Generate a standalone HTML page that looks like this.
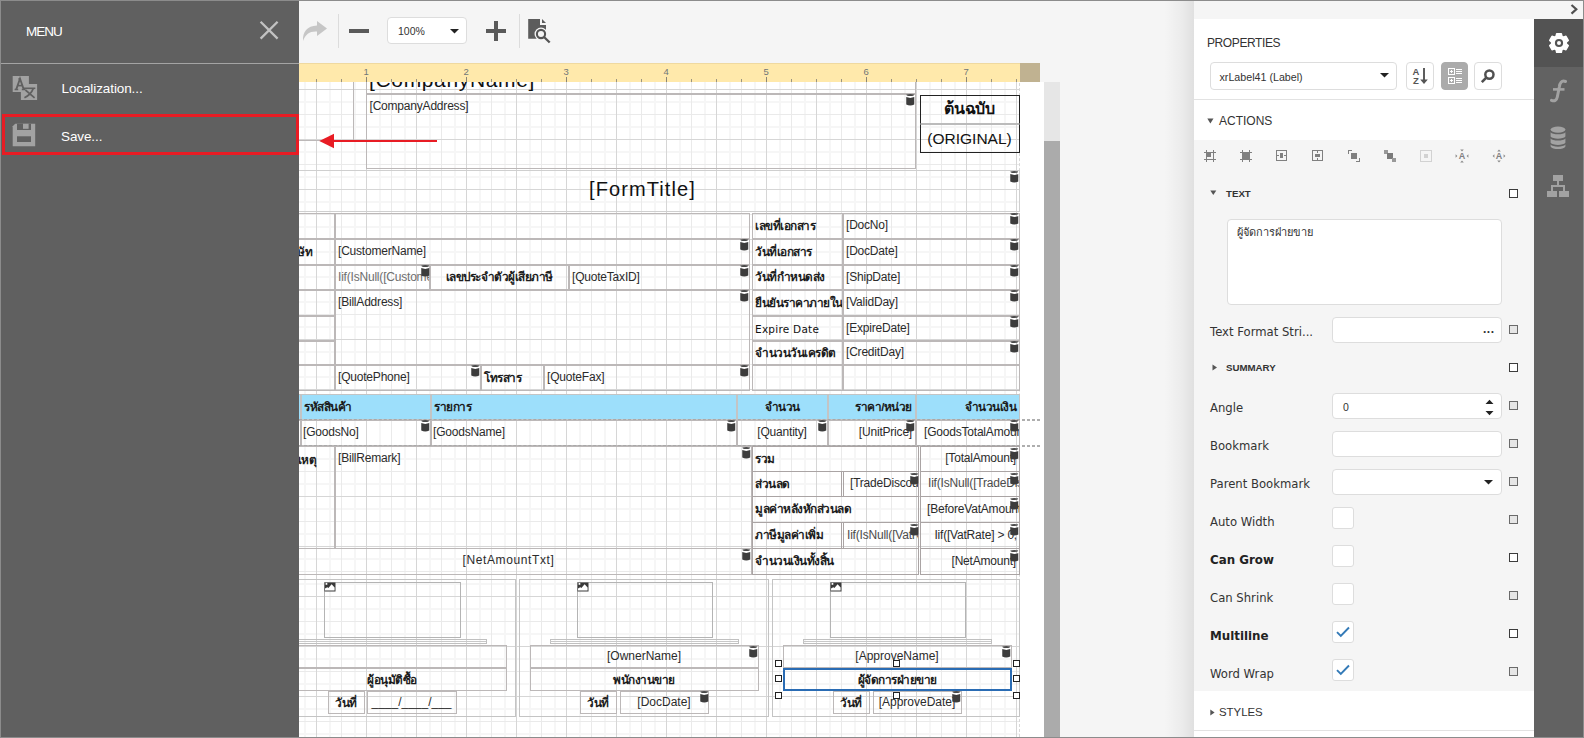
<!DOCTYPE html><html lang="th"><head><meta charset="utf-8"><title>Report Designer</title><style>
*{box-sizing:border-box;margin:0;padding:0}
html,body{width:1584px;height:738px;overflow:hidden;background:#f5f5f5}
body{position:relative;font-family:"Liberation Sans",sans-serif;color:#333}
.a{position:absolute}
#surf{position:absolute;left:299px;top:82px;width:745px;height:655px;background:#fff;overflow:hidden}
#page{position:absolute;left:-299px;top:-82px;width:1584px;height:738px}
.c{position:absolute;border:1px solid #bcb8b8;font-size:12px;letter-spacing:-0.2px;color:#2b2b2b;white-space:nowrap;overflow:hidden;display:flex;align-items:center;padding:0 3px 2px 2px}
.c.t{align-items:flex-start;padding-top:4px}
.c.ctr{justify-content:center}
.c.r{justify-content:flex-end}
.c.g{color:#6e6e6e}
.c.b{font-weight:bold;font-size:11.8px;letter-spacing:-0.5px;color:#1c1c1c}
.hd{background:#9ddffb}
.db{position:absolute;width:9px;height:12px}
.pic{position:absolute;width:12px;height:10px}
.hnd{position:absolute;width:7px;height:7px;border:1px solid #222;background:#fff}
.lbl{position:absolute;left:1210px;font-family:"DejaVu Sans","Liberation Sans",sans-serif;font-size:11.65px;color:#333;white-space:nowrap;line-height:14px}
.lbl.b{font-weight:bold;font-size:11.85px;color:#222}
.inp{position:absolute;left:1332px;width:170px;height:26px;background:#fff;border:1px solid #ddd;border-radius:4px}
.chk{position:absolute;left:1332px;width:22px;height:22px;background:#fff;border:1px solid #ddd;border-radius:3px}
.sq{position:absolute;left:1509px;width:9px;height:9px;border:1px solid #6a6a6a;background:#e6e6e6}
.sq.w{border-color:#3c3c3c;background:#fff}
.btn{position:absolute;top:62px;width:28px;height:28px;border:1px solid #ddd;border-radius:4px;background:#fff}
</style></head><body>
<div class="a" style="left:299px;top:0;width:895px;height:63px;background:#f5f5f5"></div>
<svg class="a" style="left:302px;top:20px" width="26" height="22" viewBox="0 0 26 22"><path d="M15 1 L25 8.5 L15 16 V11.5 C8 11 3.5 14 1 21 C0.5 12 5 6 15 5.5 Z" fill="#c6c6c6"/></svg>
<div class="a" style="left:338px;top:14px;width:1px;height:34px;background:#dcdcdc"></div>
<div class="a" style="left:349px;top:29px;width:20px;height:4px;background:#5a5a5a"></div>
<div class="a" style="left:387px;top:17px;width:80px;height:27px;background:#fff;border:1px solid #ddd;border-radius:4px"></div>
<div class="a" style="left:398px;top:24px;font-size:10.5px;line-height:14px;color:#333">100%</div>
<svg class="a" style="left:450px;top:29px" width="9" height="5" viewBox="0 0 9 5"><path d="M0 0H9L4.5 4.6Z" fill="#222"/></svg>
<div class="a" style="left:486px;top:29px;width:20px;height:4px;background:#5a5a5a"></div>
<div class="a" style="left:494px;top:21px;width:4px;height:20px;background:#5a5a5a"></div>
<div class="a" style="left:519px;top:14px;width:1px;height:34px;background:#dcdcdc"></div>
<svg class="a" style="left:528px;top:18px" width="24" height="26" viewBox="0 0 24 26"><path d="M0.2 1H12V7H18V20.7H0.2Z" fill="#5c5c5c"/><path d="M14 1L18 4.9H14Z" fill="#5c5c5c"/><circle cx="13" cy="16" r="6.5" fill="#f5f5f5"/><circle cx="13" cy="16" r="4.1" fill="none" stroke="#555" stroke-width="2.1"/><path d="M16 19L21.7 24.5" stroke="#555" stroke-width="2.3"/></svg>
<div class="a" style="left:299px;top:63px;width:721px;height:19px;background:#ffe9ab;border-top:1px solid #efd9a0"></div>
<div class="a" style="left:1020px;top:63px;width:20px;height:19px;background:#c0b291"></div>
<svg class="a" style="left:299px;top:63px" width="721" height="20" viewBox="299 63 721 20" shape-rendering="crispEdges"><rect x="316.0" y="79" width="1" height="3" fill="#9a9482"/><rect x="341.0" y="79" width="1" height="3" fill="#9a9482"/><rect x="366.0" y="77" width="1" height="5" fill="#8a8577"/><rect x="391.0" y="79" width="1" height="3" fill="#9a9482"/><rect x="416.0" y="79" width="1" height="3" fill="#9a9482"/><rect x="441.0" y="79" width="1" height="3" fill="#9a9482"/><rect x="466.0" y="77" width="1" height="5" fill="#8a8577"/><rect x="491.0" y="79" width="1" height="3" fill="#9a9482"/><rect x="516.0" y="79" width="1" height="3" fill="#9a9482"/><rect x="541.0" y="79" width="1" height="3" fill="#9a9482"/><rect x="566.0" y="77" width="1" height="5" fill="#8a8577"/><rect x="591.0" y="79" width="1" height="3" fill="#9a9482"/><rect x="616.0" y="79" width="1" height="3" fill="#9a9482"/><rect x="641.0" y="79" width="1" height="3" fill="#9a9482"/><rect x="666.0" y="77" width="1" height="5" fill="#8a8577"/><rect x="691.0" y="79" width="1" height="3" fill="#9a9482"/><rect x="716.0" y="79" width="1" height="3" fill="#9a9482"/><rect x="741.0" y="79" width="1" height="3" fill="#9a9482"/><rect x="766.0" y="77" width="1" height="5" fill="#8a8577"/><rect x="791.0" y="79" width="1" height="3" fill="#9a9482"/><rect x="816.0" y="79" width="1" height="3" fill="#9a9482"/><rect x="841.0" y="79" width="1" height="3" fill="#9a9482"/><rect x="866.0" y="77" width="1" height="5" fill="#8a8577"/><rect x="891.0" y="79" width="1" height="3" fill="#9a9482"/><rect x="916.0" y="79" width="1" height="3" fill="#9a9482"/><rect x="941.0" y="79" width="1" height="3" fill="#9a9482"/><rect x="966.0" y="77" width="1" height="5" fill="#8a8577"/><rect x="991.0" y="79" width="1" height="3" fill="#9a9482"/><rect x="1016.0" y="79" width="1" height="3" fill="#9a9482"/><text x="366.2" y="75" font-size="9.5" fill="#6f7678" text-anchor="middle" font-family="Liberation Sans, sans-serif" shape-rendering="auto">1</text><text x="466.2" y="75" font-size="9.5" fill="#6f7678" text-anchor="middle" font-family="Liberation Sans, sans-serif" shape-rendering="auto">2</text><text x="566.2" y="75" font-size="9.5" fill="#6f7678" text-anchor="middle" font-family="Liberation Sans, sans-serif" shape-rendering="auto">3</text><text x="666.2" y="75" font-size="9.5" fill="#6f7678" text-anchor="middle" font-family="Liberation Sans, sans-serif" shape-rendering="auto">4</text><text x="766.2" y="75" font-size="9.5" fill="#6f7678" text-anchor="middle" font-family="Liberation Sans, sans-serif" shape-rendering="auto">5</text><text x="866.2" y="75" font-size="9.5" fill="#6f7678" text-anchor="middle" font-family="Liberation Sans, sans-serif" shape-rendering="auto">6</text><text x="966.2" y="75" font-size="9.5" fill="#6f7678" text-anchor="middle" font-family="Liberation Sans, sans-serif" shape-rendering="auto">7</text></svg>
<div id="surf"><div id="page">
<svg class="a" style="left:299px;top:82px" width="721" height="655" viewBox="299 82 721 655" shape-rendering="crispEdges"><rect x="299" y="101" width="721" height="2" fill="#f6f6f6"/><rect x="299" y="126" width="721" height="2" fill="#f6f6f6"/><rect x="299" y="151" width="721" height="2" fill="#f6f6f6"/><rect x="299" y="176" width="721" height="2" fill="#f6f6f6"/><rect x="299" y="201" width="721" height="2" fill="#f6f6f6"/><rect x="299" y="226" width="721" height="2" fill="#f6f6f6"/><rect x="299" y="251" width="721" height="2" fill="#f6f6f6"/><rect x="299" y="276" width="721" height="2" fill="#f6f6f6"/><rect x="299" y="301" width="721" height="2" fill="#f6f6f6"/><rect x="299" y="326" width="721" height="2" fill="#f6f6f6"/><rect x="299" y="351" width="721" height="2" fill="#f6f6f6"/><rect x="299" y="376" width="721" height="2" fill="#f6f6f6"/><rect x="299" y="458" width="721" height="2" fill="#f6f6f6"/><rect x="299" y="483" width="721" height="2" fill="#f6f6f6"/><rect x="299" y="508" width="721" height="2" fill="#f6f6f6"/><rect x="299" y="533" width="721" height="2" fill="#f6f6f6"/><rect x="299" y="558" width="721" height="2" fill="#f6f6f6"/><rect x="299" y="583" width="721" height="2" fill="#f6f6f6"/><rect x="299" y="608" width="721" height="2" fill="#f6f6f6"/><rect x="299" y="633" width="721" height="2" fill="#f6f6f6"/><rect x="299" y="658" width="721" height="2" fill="#f6f6f6"/><rect x="299" y="683" width="721" height="2" fill="#f6f6f6"/><rect x="299" y="708" width="721" height="2" fill="#f6f6f6"/><rect x="299" y="733" width="721" height="2" fill="#f6f6f6"/><rect x="304" y="82" width="2" height="655" fill="#f6f6f6"/><rect x="329" y="82" width="2" height="655" fill="#f6f6f6"/><rect x="354" y="82" width="2" height="655" fill="#f6f6f6"/><rect x="379" y="82" width="2" height="655" fill="#f6f6f6"/><rect x="404" y="82" width="2" height="655" fill="#f6f6f6"/><rect x="429" y="82" width="2" height="655" fill="#f6f6f6"/><rect x="454" y="82" width="2" height="655" fill="#f6f6f6"/><rect x="479" y="82" width="2" height="655" fill="#f6f6f6"/><rect x="504" y="82" width="2" height="655" fill="#f6f6f6"/><rect x="529" y="82" width="2" height="655" fill="#f6f6f6"/><rect x="554" y="82" width="2" height="655" fill="#f6f6f6"/><rect x="579" y="82" width="2" height="655" fill="#f6f6f6"/><rect x="604" y="82" width="2" height="655" fill="#f6f6f6"/><rect x="629" y="82" width="2" height="655" fill="#f6f6f6"/><rect x="654" y="82" width="2" height="655" fill="#f6f6f6"/><rect x="679" y="82" width="2" height="655" fill="#f6f6f6"/><rect x="704" y="82" width="2" height="655" fill="#f6f6f6"/><rect x="729" y="82" width="2" height="655" fill="#f6f6f6"/><rect x="754" y="82" width="2" height="655" fill="#f6f6f6"/><rect x="779" y="82" width="2" height="655" fill="#f6f6f6"/><rect x="804" y="82" width="2" height="655" fill="#f6f6f6"/><rect x="829" y="82" width="2" height="655" fill="#f6f6f6"/><rect x="854" y="82" width="2" height="655" fill="#f6f6f6"/><rect x="879" y="82" width="2" height="655" fill="#f6f6f6"/><rect x="904" y="82" width="2" height="655" fill="#f6f6f6"/><rect x="929" y="82" width="2" height="655" fill="#f6f6f6"/><rect x="954" y="82" width="2" height="655" fill="#f6f6f6"/><rect x="979" y="82" width="2" height="655" fill="#f6f6f6"/><rect x="1004" y="82" width="2" height="655" fill="#f6f6f6"/><rect x="299" y="114" width="721" height="1" fill="#eaeaea"/><rect x="299" y="164" width="721" height="1" fill="#eaeaea"/><rect x="299" y="214" width="721" height="1" fill="#eaeaea"/><rect x="299" y="264" width="721" height="1" fill="#eaeaea"/><rect x="299" y="314" width="721" height="1" fill="#eaeaea"/><rect x="299" y="364" width="721" height="1" fill="#eaeaea"/><rect x="299" y="471" width="721" height="1" fill="#eaeaea"/><rect x="299" y="521" width="721" height="1" fill="#eaeaea"/><rect x="299" y="571" width="721" height="1" fill="#eaeaea"/><rect x="299" y="621" width="721" height="1" fill="#eaeaea"/><rect x="299" y="671" width="721" height="1" fill="#eaeaea"/><rect x="299" y="721" width="721" height="1" fill="#eaeaea"/><rect x="341" y="82" width="1" height="655" fill="#eaeaea"/><rect x="391" y="82" width="1" height="655" fill="#eaeaea"/><rect x="441" y="82" width="1" height="655" fill="#eaeaea"/><rect x="491" y="82" width="1" height="655" fill="#eaeaea"/><rect x="541" y="82" width="1" height="655" fill="#eaeaea"/><rect x="591" y="82" width="1" height="655" fill="#eaeaea"/><rect x="641" y="82" width="1" height="655" fill="#eaeaea"/><rect x="691" y="82" width="1" height="655" fill="#eaeaea"/><rect x="741" y="82" width="1" height="655" fill="#eaeaea"/><rect x="791" y="82" width="1" height="655" fill="#eaeaea"/><rect x="841" y="82" width="1" height="655" fill="#eaeaea"/><rect x="891" y="82" width="1" height="655" fill="#eaeaea"/><rect x="941" y="82" width="1" height="655" fill="#eaeaea"/><rect x="991" y="82" width="1" height="655" fill="#eaeaea"/><rect x="299" y="89" width="721" height="1" fill="#d6d6d6"/><rect x="299" y="139" width="721" height="1" fill="#d6d6d6"/><rect x="299" y="189" width="721" height="1" fill="#d6d6d6"/><rect x="299" y="239" width="721" height="1" fill="#d6d6d6"/><rect x="299" y="289" width="721" height="1" fill="#d6d6d6"/><rect x="299" y="339" width="721" height="1" fill="#d6d6d6"/><rect x="299" y="389" width="721" height="1" fill="#d6d6d6"/><rect x="299" y="446" width="721" height="1" fill="#d6d6d6"/><rect x="299" y="496" width="721" height="1" fill="#d6d6d6"/><rect x="299" y="546" width="721" height="1" fill="#d6d6d6"/><rect x="299" y="596" width="721" height="1" fill="#d6d6d6"/><rect x="299" y="646" width="721" height="1" fill="#d6d6d6"/><rect x="299" y="696" width="721" height="1" fill="#d6d6d6"/><rect x="316" y="82" width="1" height="655" fill="#d6d6d6"/><rect x="366" y="82" width="1" height="655" fill="#d6d6d6"/><rect x="416" y="82" width="1" height="655" fill="#d6d6d6"/><rect x="466" y="82" width="1" height="655" fill="#d6d6d6"/><rect x="516" y="82" width="1" height="655" fill="#d6d6d6"/><rect x="566" y="82" width="1" height="655" fill="#d6d6d6"/><rect x="616" y="82" width="1" height="655" fill="#d6d6d6"/><rect x="666" y="82" width="1" height="655" fill="#d6d6d6"/><rect x="716" y="82" width="1" height="655" fill="#d6d6d6"/><rect x="766" y="82" width="1" height="655" fill="#d6d6d6"/><rect x="816" y="82" width="1" height="655" fill="#d6d6d6"/><rect x="866" y="82" width="1" height="655" fill="#d6d6d6"/><rect x="916" y="82" width="1" height="655" fill="#d6d6d6"/><rect x="966" y="82" width="1" height="655" fill="#d6d6d6"/><rect x="1016" y="82" width="1" height="655" fill="#d6d6d6"/></svg>
<div class="a" style="left:1019px;top:83px;width:0;height:654px;border-left:1px dashed #d8d8d8"></div>
<div class="c " style="left:250px;top:40px;width:104px;height:101px;"></div>
<div class="c" style="left:366px;top:40px;width:550px;height:54px;font-size:21px;letter-spacing:0.65px;line-height:22px;padding:0"><span style="position:absolute;left:2px;top:27.6px;color:#111">[CompanyName]</span></div>
<div class="c t" style="left:366px;top:94px;width:550px;height:75px;padding-top:4px;padding-left:2.5px">[CompanyAddress]</div>
<svg class="db" style="left:906px;top:94px" viewBox="0 0 9 12"><path d="M0.4 0.5 Q4.25 -0.5 8.1 0.5 Q8.3 1.9 4.25 2.1 Q0.2 1.9 0.4 0.5Z" fill="#4a4a4a"/><path d="M0.25 3.1 Q4.25 4.7 8.25 3.1 V10.4 Q4.25 12.6 0.25 10.4 Z" fill="#3c3c3c"/></svg>
<div class="c ctr" style="left:920px;top:95px;width:100px;height:29px;border-color:#222;border-bottom-color:#bbb;font-size:16px;font-weight:bold;color:#111">ต้นฉบับ</div>
<div class="c ctr" style="left:920px;top:124px;width:100px;height:29px;border-color:#222;border-top-color:#bbb;font-size:15.5px;letter-spacing:0;color:#111;padding-bottom:0">(ORIGINAL)</div>
<div class="c ctr" style="left:266px;top:170px;width:754px;height:42px;font-size:20px;letter-spacing:1.1px;color:#111;border-color:#cfcfcf;padding-bottom:4px">[FormTitle]</div>
<svg class="db" style="left:1010px;top:171px" viewBox="0 0 9 12"><path d="M0.4 0.5 Q4.25 -0.5 8.1 0.5 Q8.3 1.9 4.25 2.1 Q0.2 1.9 0.4 0.5Z" fill="#4a4a4a"/><path d="M0.25 3.1 Q4.25 4.7 8.25 3.1 V10.4 Q4.25 12.6 0.25 10.4 Z" fill="#3c3c3c"/></svg>
<div class="c " style="left:266px;top:213px;width:69px;height:26px;"></div>
<div class="c " style="left:335px;top:213px;width:415px;height:26px;"></div>
<div class="c b r" style="left:266px;top:239px;width:69px;height:26px;padding-right:22px">บริษัท</div>
<div class="c " style="left:335px;top:239px;width:415px;height:26px;">[CustomerName]</div>
<svg class="db" style="left:740px;top:239px" viewBox="0 0 9 12"><path d="M0.4 0.5 Q4.25 -0.5 8.1 0.5 Q8.3 1.9 4.25 2.1 Q0.2 1.9 0.4 0.5Z" fill="#4a4a4a"/><path d="M0.25 3.1 Q4.25 4.7 8.25 3.1 V10.4 Q4.25 12.6 0.25 10.4 Z" fill="#3c3c3c"/></svg>
<div class="c " style="left:266px;top:265px;width:69px;height:25px;"></div>
<div class="c g" style="left:335px;top:265px;width:95px;height:25px;">Iif(IsNull([Customer</div>
<svg class="db" style="left:421px;top:265px" viewBox="0 0 9 12"><path d="M0.4 0.5 Q4.25 -0.5 8.1 0.5 Q8.3 1.9 4.25 2.1 Q0.2 1.9 0.4 0.5Z" fill="#4a4a4a"/><path d="M0.25 3.1 Q4.25 4.7 8.25 3.1 V10.4 Q4.25 12.6 0.25 10.4 Z" fill="#3c3c3c"/></svg>
<div class="c b ctr" style="left:430px;top:265px;width:139px;height:25px;">เลขประจำตัวผู้เสียภาษี</div>
<div class="c " style="left:569px;top:265px;width:181px;height:25px;">[QuoteTaxID]</div>
<svg class="db" style="left:740px;top:265px" viewBox="0 0 9 12"><path d="M0.4 0.5 Q4.25 -0.5 8.1 0.5 Q8.3 1.9 4.25 2.1 Q0.2 1.9 0.4 0.5Z" fill="#4a4a4a"/><path d="M0.25 3.1 Q4.25 4.7 8.25 3.1 V10.4 Q4.25 12.6 0.25 10.4 Z" fill="#3c3c3c"/></svg>
<div class="c " style="left:266px;top:290px;width:69px;height:26px;"></div>
<div class="c " style="left:266px;top:316px;width:69px;height:25px;"></div>
<div class="c " style="left:266px;top:341px;width:69px;height:24px;"></div>
<div class="c t" style="left:335px;top:290px;width:415px;height:75px;">[BillAddress]</div>
<svg class="db" style="left:740px;top:290px" viewBox="0 0 9 12"><path d="M0.4 0.5 Q4.25 -0.5 8.1 0.5 Q8.3 1.9 4.25 2.1 Q0.2 1.9 0.4 0.5Z" fill="#4a4a4a"/><path d="M0.25 3.1 Q4.25 4.7 8.25 3.1 V10.4 Q4.25 12.6 0.25 10.4 Z" fill="#3c3c3c"/></svg>
<div class="c " style="left:266px;top:365px;width:69px;height:26px;"></div>
<div class="c " style="left:335px;top:365px;width:146px;height:26px;">[QuotePhone]</div>
<svg class="db" style="left:471px;top:365px" viewBox="0 0 9 12"><path d="M0.4 0.5 Q4.25 -0.5 8.1 0.5 Q8.3 1.9 4.25 2.1 Q0.2 1.9 0.4 0.5Z" fill="#4a4a4a"/><path d="M0.25 3.1 Q4.25 4.7 8.25 3.1 V10.4 Q4.25 12.6 0.25 10.4 Z" fill="#3c3c3c"/></svg>
<div class="c b" style="left:481px;top:365px;width:63px;height:26px;">โทรสาร</div>
<div class="c " style="left:544px;top:365px;width:206px;height:26px;">[QuoteFax]</div>
<svg class="db" style="left:740px;top:365px" viewBox="0 0 9 12"><path d="M0.4 0.5 Q4.25 -0.5 8.1 0.5 Q8.3 1.9 4.25 2.1 Q0.2 1.9 0.4 0.5Z" fill="#4a4a4a"/><path d="M0.25 3.1 Q4.25 4.7 8.25 3.1 V10.4 Q4.25 12.6 0.25 10.4 Z" fill="#3c3c3c"/></svg>
<div class="c b" style="left:752px;top:213px;width:91px;height:26px;">เลขที่เอกสาร</div>
<div class="c " style="left:843px;top:213px;width:177px;height:26px;">[DocNo]</div>
<svg class="db" style="left:1010px;top:213px" viewBox="0 0 9 12"><path d="M0.4 0.5 Q4.25 -0.5 8.1 0.5 Q8.3 1.9 4.25 2.1 Q0.2 1.9 0.4 0.5Z" fill="#4a4a4a"/><path d="M0.25 3.1 Q4.25 4.7 8.25 3.1 V10.4 Q4.25 12.6 0.25 10.4 Z" fill="#3c3c3c"/></svg>
<div class="c b" style="left:752px;top:239px;width:91px;height:26px;">วันที่เอกสาร</div>
<div class="c " style="left:843px;top:239px;width:177px;height:26px;">[DocDate]</div>
<svg class="db" style="left:1010px;top:239px" viewBox="0 0 9 12"><path d="M0.4 0.5 Q4.25 -0.5 8.1 0.5 Q8.3 1.9 4.25 2.1 Q0.2 1.9 0.4 0.5Z" fill="#4a4a4a"/><path d="M0.25 3.1 Q4.25 4.7 8.25 3.1 V10.4 Q4.25 12.6 0.25 10.4 Z" fill="#3c3c3c"/></svg>
<div class="c b" style="left:752px;top:265px;width:91px;height:25px;">วันที่กำหนดส่ง</div>
<div class="c " style="left:843px;top:265px;width:177px;height:25px;">[ShipDate]</div>
<svg class="db" style="left:1010px;top:265px" viewBox="0 0 9 12"><path d="M0.4 0.5 Q4.25 -0.5 8.1 0.5 Q8.3 1.9 4.25 2.1 Q0.2 1.9 0.4 0.5Z" fill="#4a4a4a"/><path d="M0.25 3.1 Q4.25 4.7 8.25 3.1 V10.4 Q4.25 12.6 0.25 10.4 Z" fill="#3c3c3c"/></svg>
<div class="c b" style="left:752px;top:290px;width:91px;height:26px;">ยืนยันราคาภายใน</div>
<div class="c " style="left:843px;top:290px;width:177px;height:26px;">[ValidDay]</div>
<svg class="db" style="left:1010px;top:290px" viewBox="0 0 9 12"><path d="M0.4 0.5 Q4.25 -0.5 8.1 0.5 Q8.3 1.9 4.25 2.1 Q0.2 1.9 0.4 0.5Z" fill="#4a4a4a"/><path d="M0.25 3.1 Q4.25 4.7 8.25 3.1 V10.4 Q4.25 12.6 0.25 10.4 Z" fill="#3c3c3c"/></svg>
<div class="c b" style="left:752px;top:316px;width:91px;height:25px;font-family:'DejaVu Sans','Liberation Sans',sans-serif;font-weight:normal;font-size:10.5px;letter-spacing:0.25px;padding-bottom:0;color:#111">Expire Date</div>
<div class="c " style="left:843px;top:316px;width:177px;height:25px;">[ExpireDate]</div>
<svg class="db" style="left:1010px;top:316px" viewBox="0 0 9 12"><path d="M0.4 0.5 Q4.25 -0.5 8.1 0.5 Q8.3 1.9 4.25 2.1 Q0.2 1.9 0.4 0.5Z" fill="#4a4a4a"/><path d="M0.25 3.1 Q4.25 4.7 8.25 3.1 V10.4 Q4.25 12.6 0.25 10.4 Z" fill="#3c3c3c"/></svg>
<div class="c b" style="left:752px;top:341px;width:91px;height:24px;">จำนวนวันเครดิต</div>
<div class="c " style="left:843px;top:341px;width:177px;height:24px;">[CreditDay]</div>
<svg class="db" style="left:1010px;top:341px" viewBox="0 0 9 12"><path d="M0.4 0.5 Q4.25 -0.5 8.1 0.5 Q8.3 1.9 4.25 2.1 Q0.2 1.9 0.4 0.5Z" fill="#4a4a4a"/><path d="M0.25 3.1 Q4.25 4.7 8.25 3.1 V10.4 Q4.25 12.6 0.25 10.4 Z" fill="#3c3c3c"/></svg>
<div class="c b" style="left:752px;top:365px;width:91px;height:26px;"></div>
<div class="c " style="left:843px;top:365px;width:177px;height:26px;"></div>
<div class="c b hd " style="left:266px;top:394px;width:35px;height:26px;border-color:#c4c4c4;padding-bottom:0.5px"></div>
<div class="c b hd " style="left:301px;top:394px;width:130px;height:26px;border-color:#c4c4c4;padding-bottom:0.5px">รหัสสินค้า</div>
<div class="c b hd " style="left:431px;top:394px;width:306px;height:26px;border-color:#c4c4c4;padding-bottom:0.5px">รายการ</div>
<div class="c b hd ctr" style="left:737px;top:394px;width:91px;height:26px;border-color:#c4c4c4;padding-bottom:0.5px">จำนวน</div>
<div class="c b hd r" style="left:828px;top:394px;width:88px;height:26px;border-color:#c4c4c4;padding-bottom:0.5px">ราคา/หน่วย</div>
<div class="c b hd r" style="left:916px;top:394px;width:104px;height:26px;border-color:#c4c4c4;padding-bottom:0.5px">จำนวนเงิน</div>
<div class="c " style="left:266px;top:420px;width:35px;height:26px;padding-bottom:1.5px;padding-left:1px"></div>
<div class="c " style="left:301px;top:420px;width:130px;height:26px;padding-bottom:1.5px;padding-left:1px">[GoodsNo]</div>
<div class="c " style="left:431px;top:420px;width:306px;height:26px;padding-bottom:1.5px;padding-left:1px">[GoodsName]</div>
<div class="c ctr" style="left:737px;top:420px;width:91px;height:26px;padding-bottom:1.5px;">[Quantity]</div>
<div class="c r" style="left:828px;top:420px;width:88px;height:26px;padding-bottom:1.5px;">[UnitPrice]</div>
<div class="c " style="left:916px;top:420px;width:104px;height:26px;padding-bottom:1.5px;padding-left:7px">[GoodsTotalAmount]</div>
<svg class="db" style="left:421px;top:420px" viewBox="0 0 9 12"><path d="M0.4 0.5 Q4.25 -0.5 8.1 0.5 Q8.3 1.9 4.25 2.1 Q0.2 1.9 0.4 0.5Z" fill="#4a4a4a"/><path d="M0.25 3.1 Q4.25 4.7 8.25 3.1 V10.4 Q4.25 12.6 0.25 10.4 Z" fill="#3c3c3c"/></svg>
<svg class="db" style="left:727px;top:420px" viewBox="0 0 9 12"><path d="M0.4 0.5 Q4.25 -0.5 8.1 0.5 Q8.3 1.9 4.25 2.1 Q0.2 1.9 0.4 0.5Z" fill="#4a4a4a"/><path d="M0.25 3.1 Q4.25 4.7 8.25 3.1 V10.4 Q4.25 12.6 0.25 10.4 Z" fill="#3c3c3c"/></svg>
<svg class="db" style="left:818px;top:420px" viewBox="0 0 9 12"><path d="M0.4 0.5 Q4.25 -0.5 8.1 0.5 Q8.3 1.9 4.25 2.1 Q0.2 1.9 0.4 0.5Z" fill="#4a4a4a"/><path d="M0.25 3.1 Q4.25 4.7 8.25 3.1 V10.4 Q4.25 12.6 0.25 10.4 Z" fill="#3c3c3c"/></svg>
<svg class="db" style="left:906px;top:420px" viewBox="0 0 9 12"><path d="M0.4 0.5 Q4.25 -0.5 8.1 0.5 Q8.3 1.9 4.25 2.1 Q0.2 1.9 0.4 0.5Z" fill="#4a4a4a"/><path d="M0.25 3.1 Q4.25 4.7 8.25 3.1 V10.4 Q4.25 12.6 0.25 10.4 Z" fill="#3c3c3c"/></svg>
<svg class="db" style="left:1010px;top:420px" viewBox="0 0 9 12"><path d="M0.4 0.5 Q4.25 -0.5 8.1 0.5 Q8.3 1.9 4.25 2.1 Q0.2 1.9 0.4 0.5Z" fill="#4a4a4a"/><path d="M0.25 3.1 Q4.25 4.7 8.25 3.1 V10.4 Q4.25 12.6 0.25 10.4 Z" fill="#3c3c3c"/></svg>
<div class="a" style="left:299px;top:419px;width:721px;height:0;border-top:1px dashed #a9a9a9"></div>
<div class="a" style="left:1022px;top:419px;width:3px;height:2px;background:#aeaeae"></div>
<div class="a" style="left:1027px;top:419px;width:3px;height:2px;background:#aeaeae"></div>
<div class="a" style="left:1032px;top:419px;width:3px;height:2px;background:#aeaeae"></div>
<div class="a" style="left:1037px;top:419px;width:3px;height:2px;background:#aeaeae"></div>
<div class="a" style="left:1022px;top:445px;width:3px;height:2px;background:#aeaeae"></div>
<div class="a" style="left:1027px;top:445px;width:3px;height:2px;background:#aeaeae"></div>
<div class="a" style="left:1032px;top:445px;width:3px;height:2px;background:#aeaeae"></div>
<div class="a" style="left:1037px;top:445px;width:3px;height:2px;background:#aeaeae"></div>
<div class="a" style="left:299px;top:445px;width:721px;height:0;border-top:1px dashed #a9a9a9"></div>
<div class="c b t r" style="left:266px;top:446px;width:69px;height:103px;padding-right:18px;padding-top:3px">หมายเหตุ</div>
<div class="c t" style="left:335px;top:446px;width:417px;height:103px;">[BillRemark]</div>
<svg class="db" style="left:742px;top:447px" viewBox="0 0 9 12"><path d="M0.4 0.5 Q4.25 -0.5 8.1 0.5 Q8.3 1.9 4.25 2.1 Q0.2 1.9 0.4 0.5Z" fill="#4a4a4a"/><path d="M0.25 3.1 Q4.25 4.7 8.25 3.1 V10.4 Q4.25 12.6 0.25 10.4 Z" fill="#3c3c3c"/></svg>
<div class="c ctr" style="left:266px;top:548px;width:486px;height:27px;padding-bottom:3.5px;letter-spacing:0.6px">[NetAmountTxt]</div>
<svg class="db" style="left:742px;top:549px" viewBox="0 0 9 12"><path d="M0.4 0.5 Q4.25 -0.5 8.1 0.5 Q8.3 1.9 4.25 2.1 Q0.2 1.9 0.4 0.5Z" fill="#4a4a4a"/><path d="M0.25 3.1 Q4.25 4.7 8.25 3.1 V10.4 Q4.25 12.6 0.25 10.4 Z" fill="#3c3c3c"/></svg>
<div class="c b" style="left:752px;top:446px;width:167px;height:26px;border-color:#aaa4a4;padding-bottom:1.5px;">รวม</div>
<div class="c r" style="left:920px;top:446px;width:100px;height:26px;border-color:#aaa4a4;padding-bottom:1.5px;">[TotalAmount]</div>
<svg class="db" style="left:1010px;top:448px" viewBox="0 0 9 12"><path d="M0.4 0.5 Q4.25 -0.5 8.1 0.5 Q8.3 1.9 4.25 2.1 Q0.2 1.9 0.4 0.5Z" fill="#4a4a4a"/><path d="M0.25 3.1 Q4.25 4.7 8.25 3.1 V10.4 Q4.25 12.6 0.25 10.4 Z" fill="#3c3c3c"/></svg>
<div class="c b" style="left:752px;top:471px;width:90px;height:26px;border-color:#aaa4a4;padding-bottom:1.5px;">ส่วนลด</div>
<div class="c " style="left:843px;top:471px;width:76px;height:26px;border-color:#aaa4a4;padding-bottom:1.5px;padding-left:6px">[TradeDiscount]</div>
<svg class="db" style="left:910px;top:473px" viewBox="0 0 9 12"><path d="M0.4 0.5 Q4.25 -0.5 8.1 0.5 Q8.3 1.9 4.25 2.1 Q0.2 1.9 0.4 0.5Z" fill="#4a4a4a"/><path d="M0.25 3.1 Q4.25 4.7 8.25 3.1 V10.4 Q4.25 12.6 0.25 10.4 Z" fill="#3c3c3c"/></svg>
<div class="c " style="left:920px;top:471px;width:100px;height:26px;border-color:#aaa4a4;padding-bottom:1.5px;padding-left:7px;color:#4c4c4c">Iif(IsNull([TradeDiscount</div>
<svg class="db" style="left:1010px;top:473px" viewBox="0 0 9 12"><path d="M0.4 0.5 Q4.25 -0.5 8.1 0.5 Q8.3 1.9 4.25 2.1 Q0.2 1.9 0.4 0.5Z" fill="#4a4a4a"/><path d="M0.25 3.1 Q4.25 4.7 8.25 3.1 V10.4 Q4.25 12.6 0.25 10.4 Z" fill="#3c3c3c"/></svg>
<div class="c b" style="left:752px;top:496px;width:167px;height:27px;border-color:#aaa4a4;padding-bottom:1.5px;">มูลค่าหลังหักส่วนลด</div>
<div class="c " style="left:920px;top:496px;width:100px;height:27px;border-color:#aaa4a4;padding-bottom:1.5px;padding-left:6px">[BeforeVatAmount]</div>
<svg class="db" style="left:1010px;top:498px" viewBox="0 0 9 12"><path d="M0.4 0.5 Q4.25 -0.5 8.1 0.5 Q8.3 1.9 4.25 2.1 Q0.2 1.9 0.4 0.5Z" fill="#4a4a4a"/><path d="M0.25 3.1 Q4.25 4.7 8.25 3.1 V10.4 Q4.25 12.6 0.25 10.4 Z" fill="#3c3c3c"/></svg>
<div class="c b" style="left:752px;top:522px;width:90px;height:27px;border-color:#aaa4a4;padding-bottom:1.5px;">ภาษีมูลค่าเพิ่ม</div>
<div class="c " style="left:843px;top:522px;width:76px;height:27px;border-color:#aaa4a4;padding-bottom:1.5px;padding-left:3px;color:#4c4c4c">Iif(IsNull([VatRate</div>
<svg class="db" style="left:910px;top:524px" viewBox="0 0 9 12"><path d="M0.4 0.5 Q4.25 -0.5 8.1 0.5 Q8.3 1.9 4.25 2.1 Q0.2 1.9 0.4 0.5Z" fill="#4a4a4a"/><path d="M0.25 3.1 Q4.25 4.7 8.25 3.1 V10.4 Q4.25 12.6 0.25 10.4 Z" fill="#3c3c3c"/></svg>
<div class="c r" style="left:920px;top:522px;width:100px;height:27px;border-color:#aaa4a4;padding-bottom:1.5px;padding-right:2px">Iif([VatRate] &gt; 0,</div>
<svg class="db" style="left:1010px;top:524px" viewBox="0 0 9 12"><path d="M0.4 0.5 Q4.25 -0.5 8.1 0.5 Q8.3 1.9 4.25 2.1 Q0.2 1.9 0.4 0.5Z" fill="#4a4a4a"/><path d="M0.25 3.1 Q4.25 4.7 8.25 3.1 V10.4 Q4.25 12.6 0.25 10.4 Z" fill="#3c3c3c"/></svg>
<div class="c b" style="left:752px;top:548px;width:167px;height:27px;border-color:#aaa4a4;padding-bottom:1.5px;">จำนวนเงินทั้งสิ้น</div>
<div class="c r" style="left:920px;top:548px;width:100px;height:27px;border-color:#aaa4a4;padding-bottom:1.5px;">[NetAmount]</div>
<svg class="db" style="left:1010px;top:550px" viewBox="0 0 9 12"><path d="M0.4 0.5 Q4.25 -0.5 8.1 0.5 Q8.3 1.9 4.25 2.1 Q0.2 1.9 0.4 0.5Z" fill="#4a4a4a"/><path d="M0.25 3.1 Q4.25 4.7 8.25 3.1 V10.4 Q4.25 12.6 0.25 10.4 Z" fill="#3c3c3c"/></svg>
<div class="c " style="left:266px;top:579px;width:250px;height:138px;border-color:#c4c4c4"></div>
<div class="c " style="left:324px;top:582px;width:137px;height:56px;border-color:#b4b4b4"></div>
<svg class="pic" style="left:324px;top:582px" viewBox="0 0 12 10"><rect x="0.5" y="0.5" width="11" height="9" fill="#3a3a3a"/><path d="M1 8.6V6.6L3.3 5.2L4.4 5.9L7.6 2.2L10.6 5.6V8.6Z" fill="#fff"/><rect x="1.6" y="0.9" width="1.7" height="1.9" fill="#fff"/></svg>
<div class="c " style="left:298px;top:639px;width:189px;height:5px;border-color:#c0c0c0"></div>
<div class="a" style="left:298px;top:641px;width:188px;height:1px;background:#c8c8c8"></div>
<div class="c ctr" style="left:278px;top:645px;width:229px;height:23px;letter-spacing:0;padding-bottom:0.5px"></div>
<div class="c b ctr" style="left:278px;top:668px;width:229px;height:23px;padding-bottom:0">ผู้อนุมัติซื้อ</div>
<div class="c b ctr" style="left:328px;top:691px;width:37px;height:23px;padding-bottom:0">วันที่</div>
<div class="c ctr" style="left:367px;top:691px;width:90px;height:23px;letter-spacing:0;padding-bottom:1.5px">____/____/___</div>
<div class="c " style="left:519px;top:579px;width:250px;height:138px;border-color:#c4c4c4"></div>
<div class="c " style="left:577px;top:582px;width:136px;height:56px;border-color:#b4b4b4"></div>
<svg class="pic" style="left:577px;top:582px" viewBox="0 0 12 10"><rect x="0.5" y="0.5" width="11" height="9" fill="#3a3a3a"/><path d="M1 8.6V6.6L3.3 5.2L4.4 5.9L7.6 2.2L10.6 5.6V8.6Z" fill="#fff"/><rect x="1.6" y="0.9" width="1.7" height="1.9" fill="#fff"/></svg>
<div class="c " style="left:550px;top:639px;width:189px;height:5px;border-color:#c0c0c0"></div>
<div class="a" style="left:550px;top:641px;width:188px;height:1px;background:#c8c8c8"></div>
<div class="c ctr" style="left:530px;top:645px;width:229px;height:23px;letter-spacing:0;padding-bottom:0.5px">[OwnerName]</div>
<div class="c b ctr" style="left:530px;top:668px;width:229px;height:23px;padding-bottom:0">พนักงานขาย</div>
<div class="c b ctr" style="left:580px;top:691px;width:37px;height:23px;padding-bottom:0">วันที่</div>
<div class="c ctr" style="left:620px;top:691px;width:89px;height:23px;letter-spacing:0;padding-bottom:1.5px">[DocDate]</div>
<svg class="db" style="left:749px;top:646px" viewBox="0 0 9 12"><path d="M0.4 0.5 Q4.25 -0.5 8.1 0.5 Q8.3 1.9 4.25 2.1 Q0.2 1.9 0.4 0.5Z" fill="#4a4a4a"/><path d="M0.25 3.1 Q4.25 4.7 8.25 3.1 V10.4 Q4.25 12.6 0.25 10.4 Z" fill="#3c3c3c"/></svg>
<svg class="db" style="left:700px;top:691px" viewBox="0 0 9 12"><path d="M0.4 0.5 Q4.25 -0.5 8.1 0.5 Q8.3 1.9 4.25 2.1 Q0.2 1.9 0.4 0.5Z" fill="#4a4a4a"/><path d="M0.25 3.1 Q4.25 4.7 8.25 3.1 V10.4 Q4.25 12.6 0.25 10.4 Z" fill="#3c3c3c"/></svg>
<div class="c " style="left:772px;top:579px;width:248px;height:138px;border-color:#c4c4c4"></div>
<div class="c " style="left:830px;top:582px;width:136px;height:56px;border-color:#b4b4b4"></div>
<svg class="pic" style="left:830px;top:582px" viewBox="0 0 12 10"><rect x="0.5" y="0.5" width="11" height="9" fill="#3a3a3a"/><path d="M1 8.6V6.6L3.3 5.2L4.4 5.9L7.6 2.2L10.6 5.6V8.6Z" fill="#fff"/><rect x="1.6" y="0.9" width="1.7" height="1.9" fill="#fff"/></svg>
<div class="c " style="left:803px;top:639px;width:189px;height:5px;border-color:#c0c0c0"></div>
<div class="a" style="left:803px;top:641px;width:188px;height:1px;background:#c8c8c8"></div>
<div class="c ctr" style="left:783px;top:645px;width:229px;height:23px;letter-spacing:0;padding-bottom:0.5px">[ApproveName]</div>
<div class="c b ctr" style="left:783px;top:668px;width:229px;height:23px;border:2px solid #2a6cb4;padding-bottom:0">ผู้จัดการฝ่ายขาย</div>
<div class="c b ctr" style="left:833px;top:691px;width:37px;height:23px;padding-bottom:0">วันที่</div>
<div class="c ctr" style="left:873px;top:691px;width:89px;height:23px;letter-spacing:0;padding-bottom:1.5px">[ApproveDate]</div>
<svg class="db" style="left:1002px;top:646px" viewBox="0 0 9 12"><path d="M0.4 0.5 Q4.25 -0.5 8.1 0.5 Q8.3 1.9 4.25 2.1 Q0.2 1.9 0.4 0.5Z" fill="#4a4a4a"/><path d="M0.25 3.1 Q4.25 4.7 8.25 3.1 V10.4 Q4.25 12.6 0.25 10.4 Z" fill="#3c3c3c"/></svg>
<svg class="db" style="left:952px;top:691px" viewBox="0 0 9 12"><path d="M0.4 0.5 Q4.25 -0.5 8.1 0.5 Q8.3 1.9 4.25 2.1 Q0.2 1.9 0.4 0.5Z" fill="#4a4a4a"/><path d="M0.25 3.1 Q4.25 4.7 8.25 3.1 V10.4 Q4.25 12.6 0.25 10.4 Z" fill="#3c3c3c"/></svg>
<div class="hnd" style="left:775px;top:660px"></div>
<div class="hnd" style="left:775px;top:675px"></div>
<div class="hnd" style="left:775px;top:692px"></div>
<div class="hnd" style="left:893px;top:660px"></div>
<div class="hnd" style="left:893px;top:692px"></div>
<div class="hnd" style="left:1013px;top:660px"></div>
<div class="hnd" style="left:1013px;top:675px"></div>
<div class="hnd" style="left:1013px;top:692px"></div>
</div></div>
<div class="a" style="left:1044px;top:82px;width:16px;height:59px;background:#e6e6e6"></div>
<div class="a" style="left:1044px;top:141px;width:16px;height:596px;background:#ababab"></div>
<svg class="a" style="left:315px;top:130px" width="130" height="22" viewBox="315 130 130 22"><path d="M319.3 141L334 133.8V148.2Z" fill="#e81c24"/><rect x="333" y="140" width="104" height="2" fill="#e81c24"/></svg>
<div class="a" style="left:0;top:0;width:299px;height:738px;background:#606060"></div>
<div class="a" style="left:26px;top:24px;font-size:13.5px;line-height:16px;color:#fff;letter-spacing:-1px">MENU</div>
<svg class="a" style="left:259px;top:20px" width="20" height="20" viewBox="0 0 20 20"><path d="M1.6 1.8L18.6 18.6M18.6 1.8L1.6 18.6" stroke="#c2c2c2" stroke-width="2.3" fill="none"/></svg>
<div class="a" style="left:1px;top:63px;width:298px;height:1px;background:#a4a4a4"></div>
<svg class="a" style="left:12px;top:76px" width="26" height="24" viewBox="0 0 26 24"><rect x="0.7" y="0" width="16.2" height="16" fill="#a2a2a2"/><rect x="8.9" y="8" width="16.2" height="16" fill="#a2a2a2"/><g stroke="#606060" fill="none"><path d="M4.3 13.2L8 2.8L11.7 13.2" stroke-width="1.9"/><path d="M5.6 9.6H10.4" stroke-width="1.6"/><path d="M2.6 13.6H6.2M9.8 13.6H13.4" stroke-width="1.5"/><path d="M6.3 2.9H8.6" stroke-width="1.3"/><path d="M11.8 12.3H23.3" stroke-width="1.6"/><path d="M13.4 14L22.6 21.8M21.2 12.6Q19 18.5 12.4 21.8" stroke-width="1.7"/></g></svg>
<div class="a" style="left:61.5px;top:81px;font-size:13.5px;line-height:16px;color:#fff;letter-spacing:-0.1px">Localization...</div>
<svg class="a" style="left:12px;top:123px" width="24" height="24" viewBox="0 0 24 24"><path d="M3.2 0.8H23.2V23.3H0.7V3.3Z" fill="#a2a2a2"/><rect x="5" y="0.8" width="14" height="6.2" fill="#606060"/><rect x="11" y="0.8" width="5.6" height="5" fill="#a2a2a2"/><rect x="5" y="13.3" width="14" height="5.7" fill="#606060"/></svg>
<div class="a" style="left:61px;top:129px;font-size:13.5px;line-height:16px;color:#fff;letter-spacing:-0.1px">Save...</div>
<div class="a" style="left:2px;top:114px;width:297px;height:41px;border:3px solid #e81c24"></div>
<div class="a" style="left:1164px;top:1px;width:30px;height:736px;background:linear-gradient(to right,rgba(0,0,0,0),rgba(0,0,0,0.035) 55%,rgba(0,0,0,0.085))"></div>
<div class="a" style="left:1194px;top:0;width:390px;height:19px;background:#f5f5f5"></div>
<div class="a" style="left:1194px;top:19px;width:340px;height:718px;background:#fff"></div>
<svg class="a" style="left:1570px;top:4px" width="8" height="11" viewBox="0 0 8 11"><path d="M1.5 1L6.3 5.3L1.5 9.6" stroke="#505050" stroke-width="2.2" fill="none"/></svg>
<div class="a" style="left:1207px;top:35px;font-size:12px;line-height:16px;color:#333;letter-spacing:-0.4px">PROPERTIES</div>
<div class="a" style="left:1210px;top:62px;width:187px;height:28px;background:#fff;border:1px solid #ddd;border-radius:4px"></div>
<div class="a" style="left:1219.5px;top:70px;font-size:10.7px;line-height:14px;color:#333">xrLabel41 (Label)</div>
<svg class="a" style="left:1380px;top:73px" width="9" height="5" viewBox="0 0 9 5"><path d="M0 0H9L4.5 4.6Z" fill="#222"/></svg>
<div class="btn" style="left:1406px"></div>
<div class="btn" style="left:1441px;width:27px;background:#ababab;border-color:#ababab"></div>
<div class="btn" style="left:1474px"></div>
<svg class="a" style="left:1406px;top:62px" width="28" height="28" viewBox="1406 62 28 28"><text x="1416" y="74.8" font-size="9.5" font-weight="bold" font-family="Liberation Sans, sans-serif" fill="#555" text-anchor="middle">A</text><text x="1416" y="84" font-size="9.5" font-weight="bold" font-family="Liberation Sans, sans-serif" fill="#555" text-anchor="middle">Z</text><path d="M1424 68V81" stroke="#555" stroke-width="1.9"/><path d="M1420.2 79.6H1427.8L1424 84Z" fill="#555"/></svg>
<svg class="a" style="left:1441px;top:62px" width="28" height="28" viewBox="1441 62 28 28" shape-rendering="crispEdges"><g fill="none" stroke="#fff" stroke-width="1"><rect x="1448.5" y="68.5" width="6" height="6"/><rect x="1448.5" y="77.5" width="6" height="6"/></g><g fill="#fff"><rect x="1450" y="71" width="3" height="1"/><rect x="1451" y="70" width="1" height="3"/><rect x="1450" y="80" width="3" height="1"/><rect x="1451" y="79" width="1" height="3"/><rect x="1456" y="69" width="6" height="1"/><rect x="1456" y="71" width="6" height="1"/><rect x="1456" y="73" width="6" height="1"/><rect x="1456" y="78" width="6" height="1"/><rect x="1456" y="80" width="6" height="1"/><rect x="1456" y="82" width="6" height="1"/></g></svg>
<svg class="a" style="left:1474px;top:62px" width="28" height="28" viewBox="1474 62 28 28"><circle cx="1489.4" cy="74.6" r="4.1" fill="none" stroke="#505050" stroke-width="2.5"/><path d="M1486.3 77.7L1481.8 82.2" stroke="#505050" stroke-width="2.6"/></svg>
<div class="a" style="left:1194px;top:99px;width:340px;height:1px;background:#e2e2e2"></div>
<svg class="a" style="left:1207px;top:118px" width="7" height="6" viewBox="0 0 7 6"><path d="M0.3 0.5H6.5L3.4 5.6Z" fill="#555"/></svg>
<div class="a" style="left:1219px;top:113px;font-size:12px;line-height:16px;color:#333">ACTIONS</div>
<div class="a" style="left:1194px;top:140px;width:340px;height:551px;background:#f5f5f5"></div>
<svg class="a" style="left:1200px;top:148px" width="334" height="16" viewBox="1200 148 334 16" shape-rendering="crispEdges"><g fill="#808080"><rect x="1206" y="150" width="1" height="12"/><rect x="1213" y="150" width="1" height="12"/><rect x="1204" y="152" width="12" height="1"/><rect x="1204" y="159" width="12" height="1"/><rect x="1207" y="153" width="4" height="4"/></g><g fill="#808080"><rect x="1242" y="150" width="1" height="12"/><rect x="1249" y="150" width="1" height="12"/><rect x="1240" y="152" width="12" height="1"/><rect x="1240" y="159" width="12" height="1"/><rect x="1243" y="153" width="6" height="6"/></g><g fill="none" stroke="#808080"><rect x="1276.5" y="150.5" width="10" height="10"/></g><g fill="#808080"><rect x="1280" y="153" width="3" height="5"/><rect x="1277" y="155" width="2" height="1"/><rect x="1284" y="155" width="2" height="1"/></g><g fill="none" stroke="#808080"><rect x="1312.5" y="150.5" width="10" height="10"/></g><g fill="#808080"><rect x="1315" y="154" width="5" height="3"/><rect x="1317" y="151" width="1" height="2"/><rect x="1317" y="158" width="1" height="2"/></g><g fill="#808080"><rect x="1351" y="153" width="6" height="6"/><rect x="1348" y="150" width="4" height="1"/><rect x="1348" y="150" width="1" height="4"/><rect x="1356" y="161" width="4" height="1"/><rect x="1359" y="158" width="1" height="4"/></g><g><rect x="1384" y="150" width="4" height="4" fill="#999"/><rect x="1387" y="153" width="6" height="6" fill="#7a7a7a"/><rect x="1392" y="158" width="4" height="4" fill="#999"/></g><g fill="none" stroke="#d2d2d2"><rect x="1420.5" y="150.5" width="11" height="11"/></g><rect x="1424" y="154" width="4" height="4" fill="#d2d2d2"/></svg>
<svg class="a" style="left:1455px;top:149px" width="14" height="14" viewBox="-7 -7 14 14"><text x="0" y="3.3" font-size="9" font-weight="bold" font-family="Liberation Sans, sans-serif" fill="#808080" text-anchor="middle">A</text><g fill="#8c8c8c"><path d="M-1.8 -6.4H1.8L0 -4.6ZM-1.8 6.4H1.8L0 4.6ZM-6.4 -1.8V1.8L-4.6 0ZM6.4 -1.8V1.8L4.6 0Z"/></g></svg>
<svg class="a" style="left:1492px;top:149px" width="14" height="14" viewBox="-7 -7 14 14"><text x="0" y="3.3" font-size="9" font-weight="bold" font-family="Liberation Sans, sans-serif" fill="#808080" text-anchor="middle">A</text><g fill="#8c8c8c"><path d="M-1.8 -4.6H1.8L0 -6.4ZM-1.8 4.6H1.8L0 6.4ZM-4.6 -1.8V1.8L-6.4 0ZM4.6 -1.8V1.8L6.4 0Z"/></g></svg>
<svg class="a" style="left:1210px;top:190px" width="7" height="6" viewBox="0 0 7 6"><path d="M0.3 0.4H6.3L3.3 5Z" fill="#555"/></svg>
<div class="a" style="left:1226px;top:188px;font-size:9.7px;font-weight:bold;line-height:12px;color:#333">TEXT</div>
<div class="sq w" style="top:189px"></div>
<div class="a" style="left:1227px;top:219px;width:275px;height:86px;background:#fff;border:1px solid #ddd;border-radius:4px"></div>
<div class="a" style="left:1237px;top:224px;font-size:11px;line-height:16px;color:#333">ผู้จัดการฝ่ายขาย</div>
<div class="lbl" style="top:325px">Text Format Stri...</div>
<div class="inp" style="top:317px"></div>
<div class="sq" style="top:325px"></div>
<svg class="a" style="left:1212px;top:364px" width="6" height="7" viewBox="0 0 6 7"><path d="M0.5 0.5L5 3.5L0.5 6.5Z" fill="#555"/></svg>
<div class="a" style="left:1226px;top:362px;font-size:9.7px;font-weight:bold;line-height:12px;color:#333">SUMMARY</div>
<div class="sq w" style="top:363px"></div>
<div class="lbl" style="top:401px">Angle</div>
<div class="inp" style="top:393px"></div>
<div class="sq" style="top:401px"></div>
<div class="lbl" style="top:439px">Bookmark</div>
<div class="inp" style="top:431px"></div>
<div class="sq" style="top:439px"></div>
<div class="lbl" style="top:477px">Parent Bookmark</div>
<div class="inp" style="top:469px"></div>
<div class="sq" style="top:477px"></div>
<div class="lbl" style="top:515px">Auto Width</div>
<div class="chk" style="top:507px"></div>
<div class="sq" style="top:515px"></div>
<div class="lbl b" style="top:553px">Can Grow</div>
<div class="chk" style="top:545px"></div>
<div class="sq w" style="top:553px"></div>
<div class="lbl" style="top:591px">Can Shrink</div>
<div class="chk" style="top:583px"></div>
<div class="sq" style="top:591px"></div>
<div class="lbl b" style="top:629px">Multiline</div>
<div class="chk" style="top:621px"></div>
<svg class="a" style="left:1336px;top:626px" width="14" height="12" viewBox="0 0 14 12"><path d="M1 6.2L4.8 10L13 1.5" stroke="#337ab7" stroke-width="1.9" fill="none"/></svg>
<div class="sq w" style="top:629px"></div>
<div class="lbl" style="top:667px">Word Wrap</div>
<div class="chk" style="top:659px"></div>
<svg class="a" style="left:1336px;top:664px" width="14" height="12" viewBox="0 0 14 12"><path d="M1 6.2L4.8 10L13 1.5" stroke="#337ab7" stroke-width="1.9" fill="none"/></svg>
<div class="sq" style="top:667px"></div>
<div class="a" style="left:1483px;top:323px;font-size:12px;line-height:12px;color:#333;font-weight:bold;letter-spacing:0.5px">...</div>
<div class="a" style="left:1343px;top:400px;font-size:10.5px;line-height:14px;color:#333">0</div>
<svg class="a" style="left:1485px;top:399px" width="9" height="17" viewBox="0 0 9 17"><path d="M0.5 5L4.5 0.8L8.5 5ZM0.5 12L4.5 16.2L8.5 12Z" fill="#222"/></svg>
<svg class="a" style="left:1484px;top:480px" width="9" height="5" viewBox="0 0 9 5"><path d="M0 0H9L4.5 4.6Z" fill="#222"/></svg>
<svg class="a" style="left:1210px;top:709px" width="5" height="7" viewBox="0 0 5 7"><path d="M0.3 0.5L4.6 3.5L0.3 6.5Z" fill="#555"/></svg>
<div class="a" style="left:1219px;top:704px;font-size:11.4px;line-height:16px;color:#333">STYLES</div>
<div class="a" style="left:1194px;top:730px;width:340px;height:1px;background:#e2e2e2"></div>
<div class="a" style="left:1534px;top:19px;width:50px;height:719px;background:#626262"></div>
<div class="a" style="left:1534px;top:19px;width:50px;height:48px;background:#535353"></div>
<svg class="a" style="left:1548px;top:32px" width="22" height="22" viewBox="-11 -11 22 22"><path d="M-2.84 -6.72L-2.28 -9.32L2.28 -9.32L2.84 -6.72L4.40 -5.82L6.93 -6.64L9.22 -2.69L7.24 -0.90L7.24 0.90L9.22 2.69L6.93 6.64L4.40 5.82L2.84 6.72L2.28 9.32L-2.28 9.32L-2.84 6.72L-4.40 5.82L-6.93 6.64L-9.22 2.69L-7.24 0.90L-7.24 -0.90L-9.22 -2.69L-6.93 -6.64L-4.40 -5.82Z" fill="#fff" stroke="#fff" stroke-width="1.6" stroke-linejoin="round"/><circle r="4.1" fill="#535353"/><circle r="2" fill="#fff"/></svg>
<svg class="a" style="left:1549px;top:79px" width="20" height="24" viewBox="0 0 20 24"><path d="M16.5 2.5C12.5 1 10.8 4 10.3 8L8.3 18C7.6 21.5 5.5 22.5 2.5 21.3" stroke="#a2a2a2" stroke-width="3" fill="none" stroke-linecap="round"/><path d="M4 10.4H15.5" stroke="#a2a2a2" stroke-width="2.6"/></svg>
<svg class="a" style="left:1550px;top:126px" width="16" height="24" viewBox="0 0 16 24"><g fill="#a2a2a2"><ellipse cx="8" cy="3.6" rx="7.4" ry="3.1"/><path d="M0.6 6.2C2.5 9 13.5 9 15.4 6.2V10.6C13.5 13.4 2.5 13.4 0.6 10.6Z"/><path d="M0.6 12.4C2.5 15.2 13.5 15.2 15.4 12.4V16.8C13.5 19.6 2.5 19.6 0.6 16.8Z"/><path d="M0.6 18.6C2.5 21.4 13.5 21.4 15.4 18.6V20.4C13.5 24 2.5 24 0.6 20.4Z"/></g></svg>
<svg class="a" style="left:1547px;top:174px" width="22" height="23" viewBox="0 0 22 23" shape-rendering="crispEdges"><g fill="#a2a2a2"><rect x="6" y="1" width="10" height="6"/><rect x="10" y="7" width="2" height="4"/><rect x="4" y="11" width="14" height="2"/><rect x="4" y="11" width="2" height="6"/><rect x="16" y="11" width="2" height="6"/><rect x="0" y="17" width="10" height="6"/><rect x="12" y="17" width="10" height="6"/></g></svg>
<div class="a" style="left:0;top:0;width:1584px;height:1px;background:#8c8c8c"></div>
<div class="a" style="left:0;top:737px;width:1584px;height:1px;background:#8c8c8c"></div>
<div class="a" style="left:0;top:0;width:1px;height:738px;background:#8c8c8c"></div>
<div class="a" style="left:1583px;top:0;width:1px;height:738px;background:#8c8c8c"></div>
</body></html>
